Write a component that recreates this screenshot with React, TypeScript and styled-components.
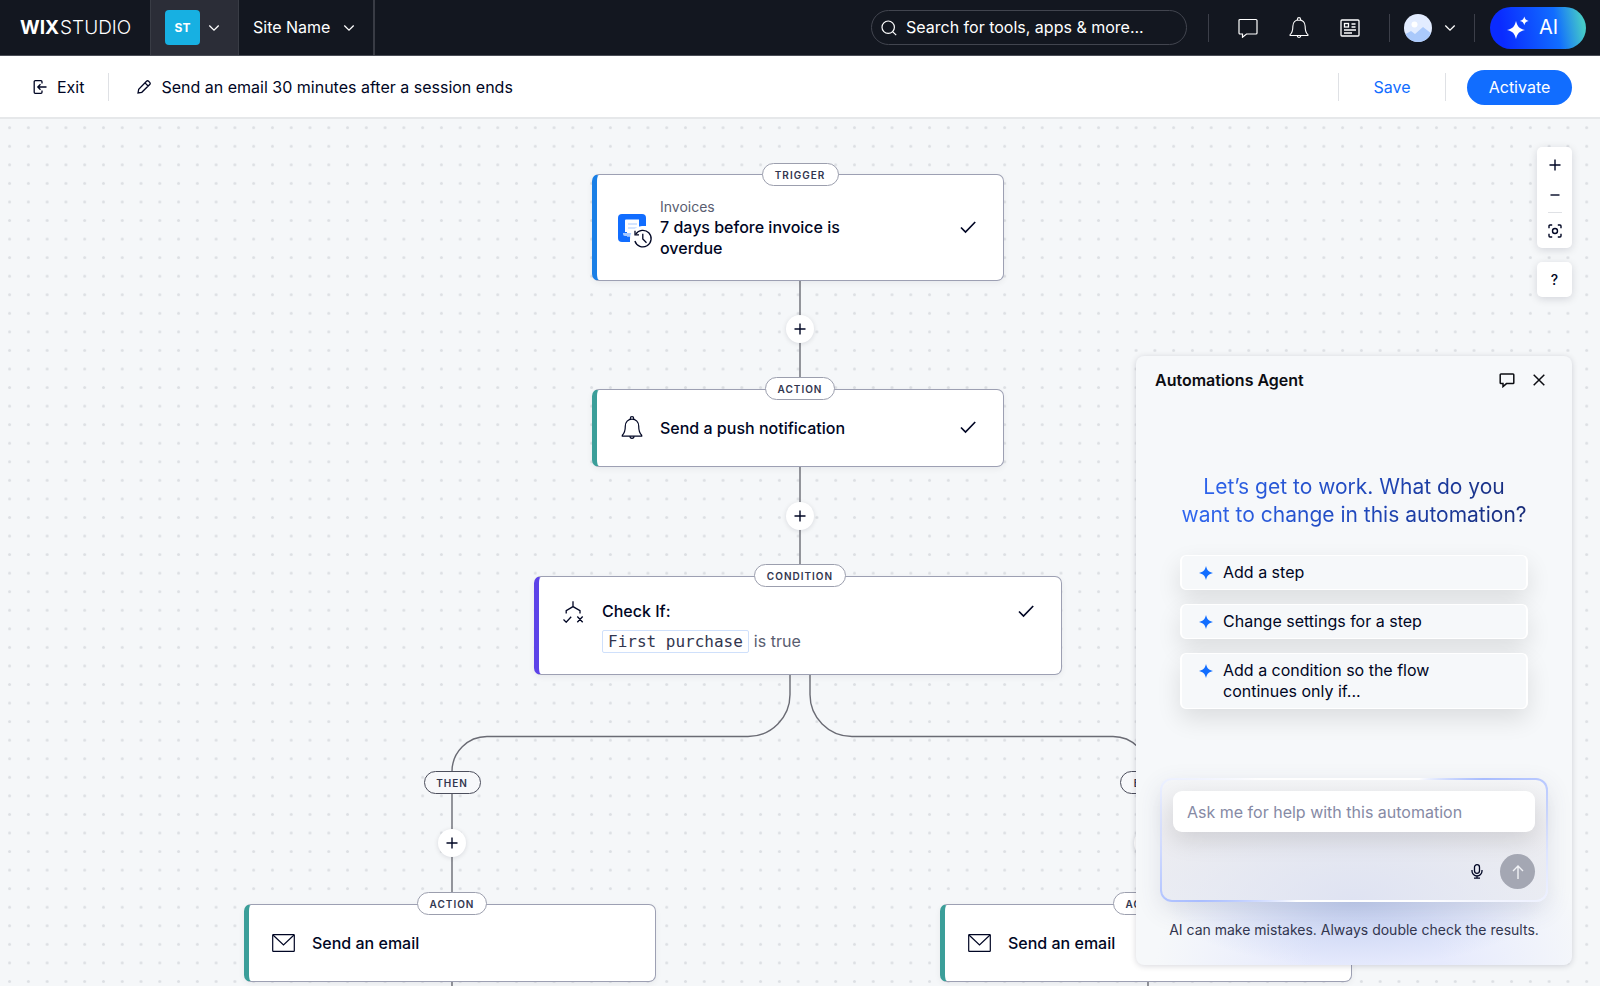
import React from "react";
import styled, { createGlobalStyle } from "styled-components";

const GlobalStyle = createGlobalStyle`
  *, *::before, *::after { box-sizing: border-box; }
  html, body { margin: 0; padding: 0; }
  body {
    font-family: Inter, "Liberation Sans", sans-serif;
    font-size: 16px;
    line-height: 21px;
    color: #000624;
    background: #f5f7f9;
  }
  button, input { font: inherit; color: inherit; }
  button { border: 0; background: none; padding: 0; cursor: pointer; }
  h1, h2, h3, p { margin: 0; font-size: inherit; font-weight: inherit; }
  svg { display: block; flex: none; }
`;

/* ---------- icons ---------- */

const Icon = styled.svg.attrs({
  fill: "none",
  stroke: "currentColor",
  "aria-hidden": true,
})``;

const ChevronIcon = () => (
  <Icon width="12" height="8" viewBox="0 0 12 8" strokeWidth="1.3">
    <path d="M1.300 1.500 6 6.200 10.700 1.500" />
  </Icon>
);
const SearchIcon = () => (
  <Icon width="16" height="16" viewBox="0 0 16 16" strokeWidth="1.2">
    <circle cx="7.2" cy="7.2" r="6.2" />
    <path d="m11.6 11.6 3.6 3.6" />
  </Icon>
);
const ChatIcon = () => (
  <Icon width="20" height="20" viewBox="0 0 20 20" strokeWidth="1.200">
    <path d="M2 1.5h16a1 1 0 0 1 1 1V15a1 1 0 0 1-1 1H8.500L4.500 19.200V16H2a1 1 0 0 1-1-1V2.500a1 1 0 0 1 1-1Z" />
  </Icon>
);
const SmallChatIcon = () => (
  <Icon width="16" height="16" viewBox="0 0 16 16" strokeWidth="1.500">
    <path d="M2 2h12a.8.8 0 0 1 .8.8v8a.8.8 0 0 1-.8.800H7.500L4 14.600v-3H2a.8.8 0 0 1-.8-.8v-8A.8.8 0 0 1 2 2Z" />
  </Icon>
);
const BellIcon = ({ size = 22 }: { size?: number }) => (
  <Icon width={size} height={size} viewBox="0 0 22 24" strokeWidth="1.200">
    <path d="M9.300 3.200V2.400a1.700 1.700 0 0 1 3.400 0v.800" />
    <path d="M11 3.100c-4 0-6.700 3-6.700 7 0 5-.8 7.300-3 9.100v1h19.400v-1c-2.200-1.800-3-4.100-3-9.100 0-4-2.700-7-6.700-7Z" />
    <path d="M9 20.300a2 2 0 0 0 4 0" />
  </Icon>
);
const NewsIcon = () => (
  <Icon width="20" height="18" viewBox="0 0 20 18" strokeWidth="1.300">
    <rect x="1" y="1" width="18" height="16" rx="1" />
    <rect x="4.500" y="4.500" width="4" height="3.500" />
    <path d="M11.500 5h4M11.500 8h4M4 11h12M4 14h8" />
  </Icon>
);
const SparklesIcon = () => (
  <svg width="22" height="24" viewBox="0 0 22 24" fill="#fff" aria-hidden="true">
    <path d="M9 5c1.600 5.900 3.200 7.500 9 9-5.800 1.500-7.400 3.100-9 9-1.600-5.900-3.200-7.500-9-9 5.800-1.500 7.400-3.100 9-9Z" />
    <path d="M17.300.5c.8 2.900 1.600 3.700 4.400 4.400-2.800.7-3.600 1.500-4.400 4.400-.8-2.900-1.600-3.700-4.400-4.400 2.800-.7 3.600-1.500 4.400-4.400Z" />
  </svg>
);
const ExitIcon = () => (
  <Icon width="14" height="14" viewBox="0 0 14 14" strokeWidth="1.3">
    <path d="M9 3.500V1.700a1 1 0 0 0-1-1H2.200a1 1 0 0 0-1 1v10.600a1 1 0 0 0 1 1H8a1 1 0 0 0 1-1v-1.800" />
    <path d="M13.500 7H5M7.500 4.300 4.800 7l2.700 2.700" />
  </Icon>
);
const PencilIcon = () => (
  <Icon width="14" height="14" viewBox="0 0 14 14" strokeWidth="1.3">
    <path d="M1 13l.7-3.800L9.500 1.300a1.500 1.500 0 0 1 2.100 0l1.100 1.100a1.500 1.500 0 0 1 0 2.100L4.800 12.300 1 13ZM8 2.900 11.100 6" />
  </Icon>
);
const PlusIcon = () => (
  <Icon width="12" height="12" viewBox="0 0 12 12" strokeWidth="1.400">
    <path d="M6 .5v11M.5 6h11" />
  </Icon>
);
const MinusIcon = () => (
  <Icon width="12" height="12" viewBox="0 0 12 12" strokeWidth="1.400">
    <path d="M1.500 6h9" />
  </Icon>
);
const FocusIcon = () => (
  <Icon width="14" height="14" viewBox="0 0 14 14" strokeWidth="1.400">
    <path d="M1 4.200V2a1 1 0 0 1 1-1h2.200M9.800 1H12a1 1 0 0 1 1 1v2.200M13 9.800V12a1 1 0 0 1-1 1H9.800M4.200 13H2a1 1 0 0 1-1-1V9.800" />
    <circle cx="7" cy="7" r="2.500" />
  </Icon>
);
const CheckIcon = () => (
  <Icon width="16" height="14" viewBox="0 0 16 14" strokeWidth="1.700">
    <path d="M1 6.500 5.500 11 15.200 1" />
  </Icon>
);
const InvoiceIcon = () => (
  <svg width="36" height="36" viewBox="0 0 36 36" fill="none" aria-hidden="true">
    <rect x="0" y="0" width="28" height="28" rx="4" fill="#116dff" />
    <path d="M8 5.500h13v13a4 4 0 0 1-4 4H9V18H7V6.500a1 1 0 0 1 1-1Z" fill="#fff" />
    <path d="M5 19h9v3H7a2 2 0 0 1-2-2v-1Z" fill="#a8caff" />
    <path d="M10 10h9M10 14h9" stroke="#a8caff" />
    <path d="M12 36V26A13 13 0 0 1 24 12H36V36Z" fill="#fff" />
    <path d="M17.800 20.200A8.300 8.300 0 1 1 16.900 27" stroke="#000624" strokeWidth="1.300" />
    <path d="M17 16.800v4h4M24.800 19.800V25l3.700 3.800" stroke="#000624" strokeWidth="1.300" />
  </svg>
);
const BranchIcon = () => (
  <Icon width="22" height="22" viewBox="0 0 22 22" strokeWidth="1.300">
    <path d="M10 .3v5.300M3.200 12.500V9.600L10 5.600l7 4v2.900" />
    <path d="m.5 18.500 2.700 2.700 5-5.500M14.300 15.500l5.400 5.700M19.700 15.500l-5.400 5.700" />
  </Icon>
);
const EnvelopeIcon = () => (
  <Icon width="24" height="18" viewBox="0 0 24 18" strokeWidth="1.200">
    <rect x=".7" y=".7" width="21.600" height="16.600" rx=".6" />
    <path d="m1 1 10.500 10L22 1" />
  </Icon>
);
const CloseIcon = () => (
  <Icon width="12" height="12" viewBox="0 0 12 12" strokeWidth="1.500">
    <path d="m.7.7 10.600 10.600M11.300.7.7 11.300" />
  </Icon>
);
const StarIcon = () => (
  <svg width="14" height="14" viewBox="0 0 14 14" fill="#116dff" aria-hidden="true">
    <path d="M7 0c1.100 4.400 2.700 6 7 7-4.300 1-5.900 2.600-7 7-1.100-4.400-2.700-6-7-7 4.300-1 5.900-2.600 7-7Z" />
  </svg>
);
const MicIcon = () => (
  <Icon width="12" height="15" viewBox="0 0 12 15" strokeWidth="1.300">
    <rect x="3.500" y=".7" width="5" height="8.600" rx="2.500" />
    <path d="M1 6v1a5 5 0 0 0 10 0V6M6 12v2.200M3 14.200h6" />
  </Icon>
);
const ArrowUpIcon = () => (
  <Icon width="12" height="14" viewBox="0 0 12 14" strokeWidth="1.400">
    <path d="M6 14V1M1 6l5-5 5 5" />
  </Icon>
);
const AvatarPicture = () => (
  <svg width="28" height="28" viewBox="0 0 28 28" aria-hidden="true">
    <defs>
      <clipPath id="avatar-clip"><circle cx="14" cy="14" r="14" /></clipPath>
    </defs>
    <g clipPath="url(#avatar-clip)">
      <rect width="28" height="28" fill="#e2ecff" />
      <circle cx="10.500" cy="10.500" r="3" fill="#fff" />
      <path d="M0 21l7-4 4 3 8-7 9 7v8H0Z" fill="#aac9fb" />
    </g>
  </svg>
);

/* ---------- page frame ---------- */

const Page = styled.div`
  display: flex;
  flex-direction: column;
  height: 100vh;
`;
const TopBar = styled.header`
  display: flex;
  align-items: center;
  height: 56px;
  flex: none;
  padding-right: 14px;
  background: #131720;
  border-bottom: 1px solid #4a4d56;
  color: #fff;
`;
const Logo = styled.a`
  display: flex;
  gap: 1px;
  width: 150px;
  padding-left: 20px;
  color: #fff;
  font-size: 19px;
  font-weight: 300;
  text-decoration: none;
  b { font-weight: 700; }
`;
const BarMenu = styled.button<{ $active?: boolean }>`
  display: flex;
  align-items: center;
  gap: 13px;
  height: 55px;
  padding: 0 18px 0 14px;
  color: #fff;
  background: ${(p) => (p.$active ? "#2b2d37" : "transparent")};
  border: solid #393c45;
  border-width: ${(p) => (p.$active ? "0 1px" : "0 2px 0 0")};
`;
const Workspace = styled.span`
  display: grid;
  place-items: center;
  width: 35px;
  height: 35px;
  margin-right: -5px;
  border-radius: 4px;
  background: #17b0e2;
  font-size: 12px;
  font-weight: 700;
`;
const Search = styled.label`
  display: flex;
  align-items: center;
  gap: 9px;
  width: 316px;
  height: 35px;
  margin: 0 21px 0 auto;
  padding: 0 9px;
  border: 1px solid #42454f;
  border-radius: 18px;
  input {
    flex: 1;
    min-width: 0;
    padding: 0;
    border: 0;
    outline: 0;
    background: none;
  }
  input::placeholder { color: #fff; opacity: 1; }
`;
const Divider = styled.span<{ $dark?: boolean }>`
  width: 1px;
  height: 28px;
  flex: none;
  background: ${(p) => (p.$dark ? "#3c3f49" : "#dfe1e5")};
`;
const IconGroup = styled.div`
  display: flex;
  padding: 0 14px;
`;
const IconButton = styled.button<{ $w: number; $h: number }>`
  display: grid;
  place-items: center;
  width: ${(p) => p.$w}px;
  height: ${(p) => p.$h}px;
`;
const HelpButton = styled(IconButton)`
  font-size: 14px;
  font-weight: 500;
`;
const ProfileButton = styled.button`
  display: flex;
  align-items: center;
  gap: 12px;
  padding: 0 18px 0 14px;
`;
const AiButton = styled.button`
  display: flex;
  align-items: center;
  gap: 10px;
  width: 96px;
  height: 42px;
  margin-left: 15px;
  padding-left: 17px;
  border-radius: 21px;
  background: linear-gradient(80deg, #0a2bff 14%, #116dff 68%, #45c9c8 94%);
  font-size: 20px;
`;
const SubBar = styled.div`
  display: flex;
  align-items: center;
  height: 63px;
  flex: none;
  padding: 1px 28px 0 33px;
  background: #fff;
  border-bottom: 2px solid #e6e8ea;
`;
const LabelButton = styled.button<{ $after?: number; $before?: number }>`
  display: flex;
  align-items: center;
  gap: 10px;
  padding: 0 ${(p) => p.$after ?? 0}px 0 ${(p) => p.$before ?? 0}px;
`;
const SubActions = styled.div`
  display: flex;
  align-items: center;
  margin-left: auto;
`;
const SaveButton = styled.button`
  width: 106px;
  height: 35px;
  color: #116dff;
`;
const ActivateButton = styled.button`
  height: 35px;
  width: 105px;
  margin-left: 21px;
  border-radius: 18px;
  background: #116dff;
  color: #fff;
`;

/* ---------- flow canvas ---------- */

const Canvas = styled.main`
  position: relative;
  flex: 1;
  min-height: 0;
  overflow: hidden;
`;
const Dots = styled.svg`
  position: absolute;
  inset: 0;
  width: 100%;
  height: 100%;
`;
const Stage = styled.div`
  position: absolute;
  top: 0;
  left: 50%;
`;
const Wires = styled.svg`
  position: absolute;
  left: -400px;
  top: 0;
`;
const Place = styled.div<{ $x: number; $y: number }>`
  position: absolute;
  left: ${(p) => p.$x}px;
  top: ${(p) => p.$y}px;
  display: flex;
  justify-content: center;
  width: 0;
`;
const Card = styled.article<{ $w: number; $h: number; $accent: string; $top?: boolean }>`
  position: relative;
  flex: none;
  display: flex;
  align-items: ${(p) => (p.$top ? "flex-start" : "center")};
  width: ${(p) => p.$w}px;
  min-height: ${(p) => p.$h}px;
  margin-left: -4px;
  padding: ${(p) => (p.$top ? "24px 27px 20px 21px" : "0 27px 0 21px")};
  background: #fff;
  border: 1px solid #9da0b3;
  border-left: 5px solid ${(p) => p.$accent};
  border-radius: 7px;
  box-shadow: 0 2px 6px rgba(0, 6, 36, 0.06);
`;
const Tag = styled.span<{ $dark?: boolean; $w: number }>`
  display: grid;
  place-items: center;
  flex: none;
  width: ${(p) => p.$w}px;
  height: 23px;
  border: 1px solid ${(p) => (p.$dark ? "#4c4e5c" : "#9c9fae")};
  border-radius: 12px;
  background: ${(p) => (p.$dark ? "#f7f8fa" : "#fff")};
  color: #32364f;
  font-size: 10px;
  line-height: 12px;
  font-weight: 600;
  letter-spacing: 1px;
`;
const CardIcon = styled.span`
  display: grid;
  place-items: center;
  flex: none;
  width: 28px;
  margin-right: 14px;
`;
const InvoiceSlot = styled(CardIcon)`
  height: 28px;
  place-items: start;
`;
const CardText = styled.div`
  flex: 1;
  min-width: 0;
`;
const CardTitle = styled.h3`
  max-width: 200px;
  font-weight: 500;
`;
const CardApp = styled.p`
  font-size: 14px;
  line-height: 20px;
  color: #595d70;
`;
const CardStatus = styled.span`
  display: grid;
  place-items: center;
  height: 21px;
`;
const Rule = styled.p`
  display: flex;
  align-items: center;
  gap: 5px;
  margin-top: 8px;
  color: #595d70;
`;
const Chip = styled.code`
  height: 23px;
  padding: 0 5px;
  border: 1px solid #cfe0fb;
  border-radius: 2px;
  background: #fff;
  color: #32364f;
  font-family: "DejaVu Sans Mono", "Liberation Mono", monospace;
  font-size: 16px;
`;
const AddButton = styled.button`
  display: grid;
  place-items: center;
  flex: none;
  width: 28px;
  height: 28px;
  border-radius: 50%;
  background: #fff;
  box-shadow: 0 1px 5px rgba(0, 6, 36, 0.12);
`;

const Tools = styled.aside`
  position: absolute;
  top: 28px;
  right: 28px;
  display: flex;
  flex-direction: column;
  gap: 14px;
`;
const ToolBox = styled.div`
  display: flex;
  flex-direction: column;
  align-items: center;
  width: 35px;
  border-radius: 5px;
  background: #fff;
  box-shadow: 0 2px 8px rgba(0, 6, 36, 0.14);
  hr {
    width: 14px;
    height: 1px;
    margin: 4px 0 0;
    border: 0;
    background: #dfe1e5;
  }
`;

/* ---------- agent panel ---------- */

const Panel = styled.section`
  position: absolute;
  right: 28px;
  bottom: 21px;
  width: 436px;
  padding: 0 23px 25px;
  border-radius: 8px;
  overflow: hidden;
  background:
    radial-gradient(190px 66px at 50% 545px, rgba(182, 197, 234, 0.75), rgba(182, 197, 234, 0) 100%),
    radial-gradient(220px 150px at 55% 100%, #e6eafd 30%, rgba(230, 234, 253, 0) 100%),
    #f6f8fa;
  box-shadow: 0 1px 6px rgba(0, 6, 36, 0.16);
`;
const PanelHead = styled.div`
  display: flex;
  align-items: center;
  height: 48px;
  margin: 0 -6px 0 -4px;
  color: #0c0d12;
  h2 { flex: 1; font-weight: 600; }
`;
const Greeting = styled.p`
  margin: 69px 0 26px;
  font-size: 21px;
  line-height: 28px;
  text-align: center;
  background: linear-gradient(100deg, #2f66f0 8%, #1f46b8 55%, #172a75 95%);
  background-clip: text;
  -webkit-background-clip: text;
  color: transparent;
`;
const Suggestions = styled.ul`
  display: flex;
  flex-direction: column;
  gap: 14px;
  margin: 0 21px 69px;
  padding: 0;
  list-style: none;
`;
const Suggestion = styled.button`
  display: flex;
  gap: 10px;
  width: 100%;
  padding: 6px 60px 6px 17px;
  border: 2px solid #fff;
  border-width: 1px 2px;
  border-radius: 6px;
  background: #f6f8fa;
  box-shadow: 0 10px 24px rgba(0, 0, 0, 0.11);
  text-align: left;
  svg { margin-top: 4px; }
`;
const Composer = styled.form`
  margin: 0 1px;
  padding: 11px;
  border: 2px solid transparent;
  border-radius: 12px;
  background:
    radial-gradient(60% 90% at 50% 100%, #dfe3f2, rgba(223, 227, 242, 0) 100%) padding-box,
    linear-gradient(#f4f5f7, #ececf0 45%, #eceef3) padding-box,
    conic-gradient(from 0deg, #fff 13%, #a9bdff 18%, #d5deff 24%, #eef1ff 30%, #fff 36%, #fff 62%, #a9bdff 69%, #d5deff 75%, #fff 84%) border-box;
  box-shadow: 0 8px 24px rgba(60, 70, 110, 0.13);
`;
const Prompt = styled.input`
  display: block;
  width: 100%;
  height: 41px;
  padding: 0 14px;
  border: 0;
  border-radius: 9px;
  outline: 0;
  background: #fff;
  box-shadow: 0 8px 24px rgba(0, 0, 0, 0.12);
  &::placeholder { color: #868aa5; opacity: 1; }
`;
const ComposerActions = styled.div`
  display: flex;
  align-items: center;
  justify-content: flex-end;
  gap: 6px;
  margin-top: 22px;
`;
const SendButton = styled.button`
  display: grid;
  place-items: center;
  width: 35px;
  height: 35px;
  border-radius: 50%;
  background: #a4a7b3;
  color: #f1f2f6;
`;
const Disclaimer = styled.p`
  margin-top: 18px;
  font-size: 14px;
  line-height: 20px;
  text-align: center;
  white-space: nowrap;
  color: #32364f;
`;

/* ---------- data ---------- */

const tags = [
  { label: "TRIGGER", x: 0, y: 44, w: 77 },
  { label: "ACTION", x: 0, y: 258, w: 70 },
  { label: "CONDITION", x: 0, y: 445, w: 92 },
  { label: "THEN", x: -348, y: 652, w: 57, dark: true },
  { label: "ELSE", x: 348, y: 652, w: 57, dark: true },
  { label: "ACTION", x: -348, y: 773, w: 70 },
  { label: "ACTION", x: 348, y: 773, w: 70 },
];
const addPoints = [
  { x: 0, y: 196 },
  { x: 0, y: 383 },
  { x: -348, y: 710 },
  { x: 348, y: 710 },
];
const suggestions = ["Add a step", "Change settings for a step", "Add a condition so the flow continues only if..."];
const ACTION = "#3b9e99";

export default function App() {
  return (
    <Page>
      <GlobalStyle />
      <TopBar>
        <Logo href="#" aria-label="Wix Studio"><b>WIX</b><span>STUDIO</span></Logo>
        <BarMenu $active><Workspace>ST</Workspace><ChevronIcon /></BarMenu>
        <BarMenu>Site Name<ChevronIcon /></BarMenu>
        <Search>
          <SearchIcon />
          <input type="text" aria-label="Search" placeholder="Search for tools, apps & more..." />
        </Search>
        <Divider $dark />
        <IconGroup>
          <IconButton $w={50} $h={40} aria-label="Messages"><ChatIcon /></IconButton>
          <IconButton $w={51} $h={40} aria-label="Notifications"><BellIcon /></IconButton>
          <IconButton $w={51} $h={40} aria-label="News"><NewsIcon /></IconButton>
        </IconGroup>
        <Divider $dark />
        <ProfileButton aria-label="Profile"><AvatarPicture /><ChevronIcon /></ProfileButton>
        <Divider $dark />
        <AiButton><SparklesIcon />AI</AiButton>
      </TopBar>

      <SubBar>
        <LabelButton $after={24}><ExitIcon />Exit</LabelButton>
        <Divider />
        <LabelButton $before={28}><PencilIcon />Send an email 30 minutes after a session ends</LabelButton>
        <SubActions>
          <Divider />
          <SaveButton>Save</SaveButton>
          <Divider />
          <ActivateButton>Activate</ActivateButton>
        </SubActions>
      </SubBar>

      <Canvas>
        <Dots aria-hidden="true">
          <defs>
            <pattern id="dots" x="0.200" y="-0.600" width="18.775" height="18.560" patternUnits="userSpaceOnUse">
              <circle cx="9.400" cy="9.300" r="1.500" fill="#dcdfe3" />
            </pattern>
          </defs>
          <rect width="100%" height="100%" fill="url(#dots)" />
        </Dots>

        <Stage>
          <Wires width="800" height="900" viewBox="0 0 800 900" fill="none" stroke="#6a6b74" strokeWidth="1.400" aria-hidden="true">
            <path d="M400 160V272M400 346V460M52 674V786M748 674V786M52 863V900M748 863V900" />
            <path d="M390 555V575a42 42 0 0 1-42 42.500H87a35 35 0 0 0-35 35" />
            <path d="M410 555V575a42 42 0 0 0 42 42.500H713a35 35 0 0 1 35 35" />
          </Wires>

          <Place $x={0} $y={55}>
            <Card $w={412} $h={107} $accent="#1a7fe6">
              <InvoiceSlot><InvoiceIcon /></InvoiceSlot>
              <CardText>
                <CardApp>Invoices</CardApp>
                <CardTitle>7 days before invoice is overdue</CardTitle>
              </CardText>
              <CardStatus><CheckIcon /></CardStatus>
            </Card>
          </Place>
          <Place $x={0} $y={270}>
            <Card $w={412} $h={78} $accent={ACTION}>
              <CardIcon><BellIcon size={24} /></CardIcon>
              <CardText><CardTitle>Send a push notification</CardTitle></CardText>
              <CardStatus><CheckIcon /></CardStatus>
            </Card>
          </Place>
          <Place $x={0} $y={457}>
            <Card $w={528} $h={99} $accent="#5d43e8" $top>
              <CardIcon><BranchIcon /></CardIcon>
              <CardText>
                <CardTitle>Check If:</CardTitle>
                <Rule><Chip>First purchase</Chip>is true</Rule>
              </CardText>
              <CardStatus><CheckIcon /></CardStatus>
            </Card>
          </Place>
          {[-348, 348].map((x) => (
            <Place key={x} $x={x} $y={785}>
              <Card $w={412} $h={78} $accent={ACTION}>
                <CardIcon><EnvelopeIcon /></CardIcon>
                <CardText><CardTitle>Send an email</CardTitle></CardText>
              </Card>
            </Place>
          ))}

          {tags.map((t, i) => (
            <Place key={i} $x={t.x} $y={t.y}><Tag $w={t.w} $dark={t.dark}>{t.label}</Tag></Place>
          ))}
          {addPoints.map((p, i) => (
            <Place key={i} $x={p.x} $y={p.y}><AddButton aria-label="Add a step here"><PlusIcon /></AddButton></Place>
          ))}
        </Stage>

        <Tools>
          <ToolBox>
            <IconButton $w={35} $h={35} aria-label="Zoom in"><PlusIcon /></IconButton>
            <IconButton $w={35} $h={26} aria-label="Zoom out"><MinusIcon /></IconButton>
            <hr />
            <IconButton $w={35} $h={35} aria-label="Fit to view"><FocusIcon /></IconButton>
          </ToolBox>
          <ToolBox>
            <HelpButton $w={35} $h={35} aria-label="Help">?</HelpButton>
          </ToolBox>
        </Tools>

        <Panel>
          <PanelHead>
            <h2>Automations Agent</h2>
            <IconButton $w={32} $h={32} aria-label="Conversations"><SmallChatIcon /></IconButton>
            <IconButton $w={32} $h={32} aria-label="Close"><CloseIcon /></IconButton>
          </PanelHead>
          <Greeting>Let’s get to work. What do you<br />want to change in this automation?</Greeting>
          <Suggestions>
            {suggestions.map((s) => (
              <li key={s}><Suggestion><StarIcon /><span>{s}</span></Suggestion></li>
            ))}
          </Suggestions>
          <Composer onSubmit={(e) => e.preventDefault()}>
            <Prompt type="text" aria-label="Message" placeholder="Ask me for help with this automation" />
            <ComposerActions>
              <IconButton type="button" $w={35} $h={35} aria-label="Dictate"><MicIcon /></IconButton>
              <SendButton type="submit" aria-label="Send"><ArrowUpIcon /></SendButton>
            </ComposerActions>
          </Composer>
          <Disclaimer>AI can make mistakes. Always double check the results.</Disclaimer>
        </Panel>
      </Canvas>
    </Page>
  );
}
